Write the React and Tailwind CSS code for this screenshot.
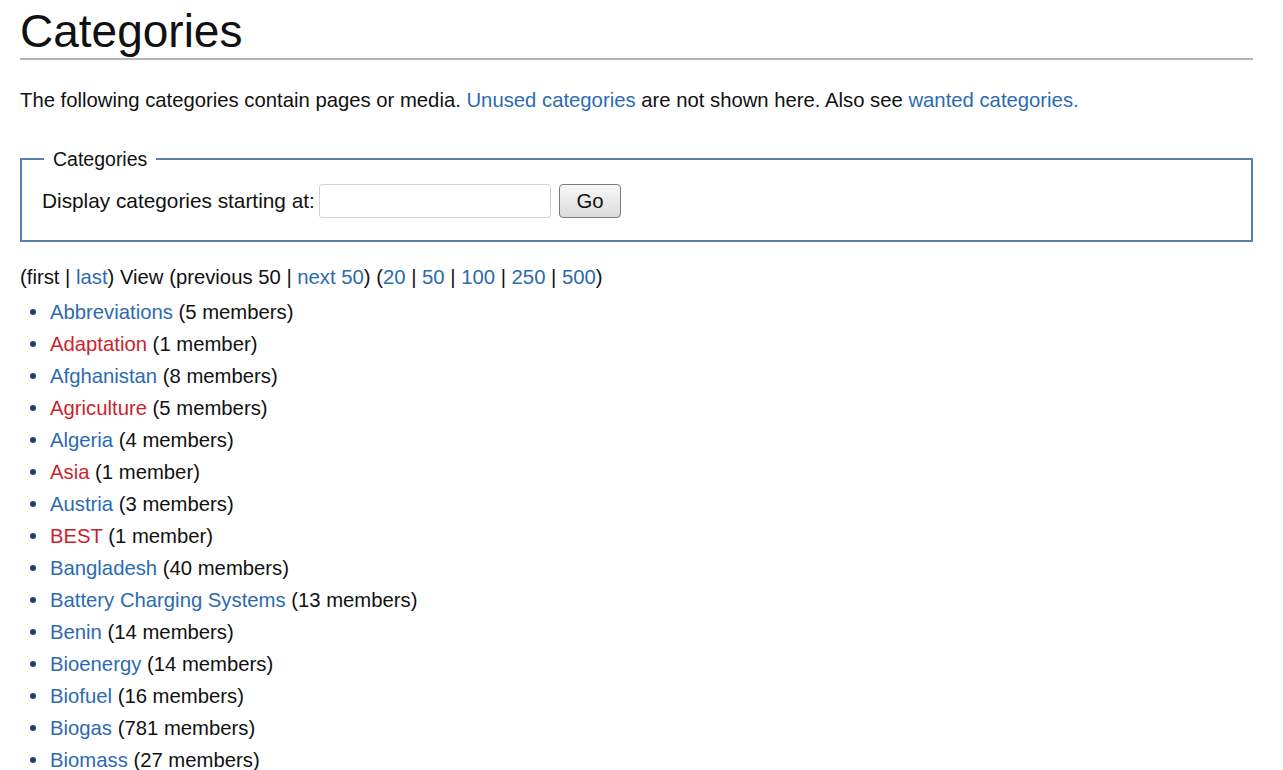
import React from "react";

const items = [
  ["Abbreviations", "5 members", false],
  ["Adaptation", "1 member", true],
  ["Afghanistan", "8 members", false],
  ["Agriculture", "5 members", true],
  ["Algeria", "4 members", false],
  ["Asia", "1 member", true],
  ["Austria", "3 members", false],
  ["BEST", "1 member", true],
  ["Bangladesh", "40 members", false],
  ["Battery Charging Systems", "13 members", false],
  ["Benin", "14 members", false],
  ["Bioenergy", "14 members", false],
  ["Biofuel", "16 members", false],
  ["Biogas", "781 members", false],
  ["Biomass", "27 members", false],
];

const B = "text-[#2c6ab1]";
const R = "text-[#cc1f2e]";

export default function App() {
  return (
    <div className="bg-white min-h-[770px] h-[770px] overflow-hidden pl-[20px] pr-[30px] text-[#111] text-[20.3px]" style={{ fontFamily: '"Liberation Sans", Arial, sans-serif' }}>
      <h1 className="text-[46px] leading-[52px] pt-[5px] pb-[1px] border-b-2 border-[#b5b5b5]">Categories</h1>
      <p className="mt-[27px] leading-[26px]">
        The following categories contain pages or media. <span className={B}>Unused categories</span> are not shown here. Also see <span className={B}>wanted categories.</span>
      </p>
      <fieldset className="mt-[35px] border-2 border-[#5b7fb3] h-[94px] px-[20px] pt-[0px]">
        <legend className="px-[9px] ml-[2px] text-[19.5px] leading-[22px]">Categories</legend>
        <div className="flex items-center mt-[14px] h-[34px]">
          <span className="w-[277px] text-[20.8px]">Display categories starting at:</span>
          <div className="w-[232px] h-[34px] border border-[#d2d2d2] rounded-[3px] bg-white"></div>
          <div className="ml-[8px] w-[62px] h-[34px] border border-[#7a7a7a] rounded-[4px] flex items-center justify-center bg-gradient-to-b from-[#f7f7f7] to-[#dcdcdc]">Go</div>
        </div>
      </fieldset>
      <p className="mt-[21px] leading-[28px]">
        (first | <span className={B}>last</span>) View (previous 50 | <span className={B}>next 50</span>) (<span className={B}>20</span> | <span className={B}>50</span> | <span className={B}>100</span> | <span className={B}>250</span> | <span className={B}>500</span>)
      </p>
      <ul className="mt-[5px]">
        {items.map(([name, count, red]) => (
          <li key={name} className="flex items-center h-[32px]">
            <span className="w-[6px] h-[6px] rounded-full bg-[#1f3f6e] ml-[10px] mr-[14px]"></span>
            <span><span className={red ? R : B}>{name}</span> ({count})</span>
          </li>
        ))}
      </ul>
    </div>
  );
}
